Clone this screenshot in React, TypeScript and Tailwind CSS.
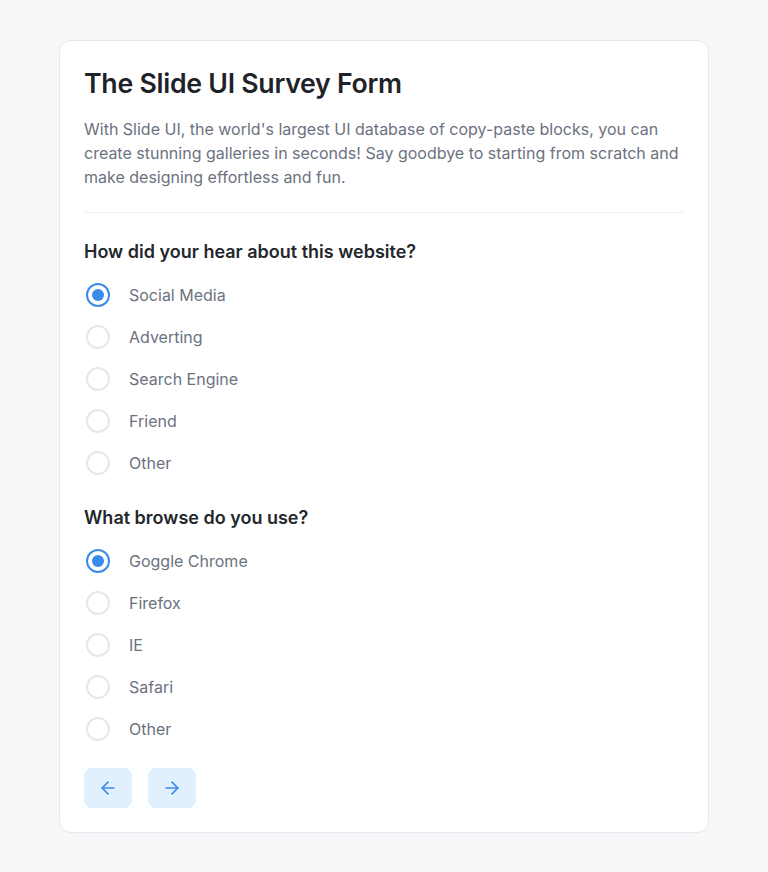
import { useState } from 'react'

const questions = [
  {
    id: 'source',
    title: 'How did your hear about this website?',
    options: ['Social Media', 'Adverting', 'Search Engine', 'Friend', 'Other'],
  },
  {
    id: 'browser',
    title: 'What browse do you use?',
    options: ['Goggle Chrome', 'Firefox', 'IE', 'Safari', 'Other'],
  },
]

function Radio({ checked }: { checked: boolean }) {
  return (
    <span
      className={`ml-0.5 flex h-6 w-6 shrink-0 items-center justify-center rounded-full border-2 ${
        checked ? 'border-[#3b8bec]' : 'border-[#e5e7eb]'
      }`}
    >
      {checked && <span className="h-3 w-3 rounded-full bg-[#3b8bec]" />}
    </span>
  )
}

export default function App() {
  const [answers, setAnswers] = useState<Record<string, string>>({
    source: 'Social Media',
    browser: 'Goggle Chrome',
  })

  return (
    <div className="min-h-screen bg-[#f6f7f9] px-[59px] pt-10 pb-10 font-['Inter',sans-serif]">
      <div className="rounded-xl border border-[#e7e8eb] bg-white p-6">
        <h1 className="text-[26.7px] leading-9 font-semibold tracking-[-0.01em] text-[#1f2329]">
          The Slide UI Survey Form
        </h1>
        <p className="mt-4 text-base leading-6 text-[#6b7280]">
          With Slide UI, the world's largest UI database of copy-paste blocks, you can create stunning
          galleries in seconds! Say goodbye to starting from scratch and make designing effortless and
          fun.
        </p>
        <div className="mt-[23px] border-t border-[#eef0f2]" />

        <div className="mt-[25px] flex flex-col gap-[29px]">
          {questions.map((q) => (
            <div key={q.id}>
              <h2 className="text-lg leading-7 font-semibold text-[#24272c]">{q.title}</h2>
              <div className="mt-[17px] flex flex-col gap-[18px]">
                {q.options.map((opt) => (
                  <label
                    key={opt}
                    className="flex cursor-pointer items-center gap-[19px]"
                    onClick={() => setAnswers({ ...answers, [q.id]: opt })}
                  >
                    <Radio checked={answers[q.id] === opt} />
                    <span className="text-base leading-6 text-[#6b7280]">{opt}</span>
                  </label>
                ))}
              </div>
            </div>
          ))}
        </div>

        <div className="mt-[27px] flex gap-4">
          <button className="flex h-10 w-12 items-center justify-center rounded-lg bg-[#e0f0fe] text-[#3b8bec]">
            <svg width="20" height="20" viewBox="0 0 24 24" fill="none" stroke="currentColor" strokeWidth="2" strokeLinecap="round" strokeLinejoin="round">
              <path d="M19 12H5" />
              <path d="M12 19l-7-7 7-7" />
            </svg>
          </button>
          <button className="flex h-10 w-12 items-center justify-center rounded-lg bg-[#e0f0fe] text-[#3b8bec]">
            <svg width="20" height="20" viewBox="0 0 24 24" fill="none" stroke="currentColor" strokeWidth="2" strokeLinecap="round" strokeLinejoin="round">
              <path d="M5 12h14" />
              <path d="M12 5l7 7-7 7" />
            </svg>
          </button>
        </div>
      </div>
    </div>
  )
}
